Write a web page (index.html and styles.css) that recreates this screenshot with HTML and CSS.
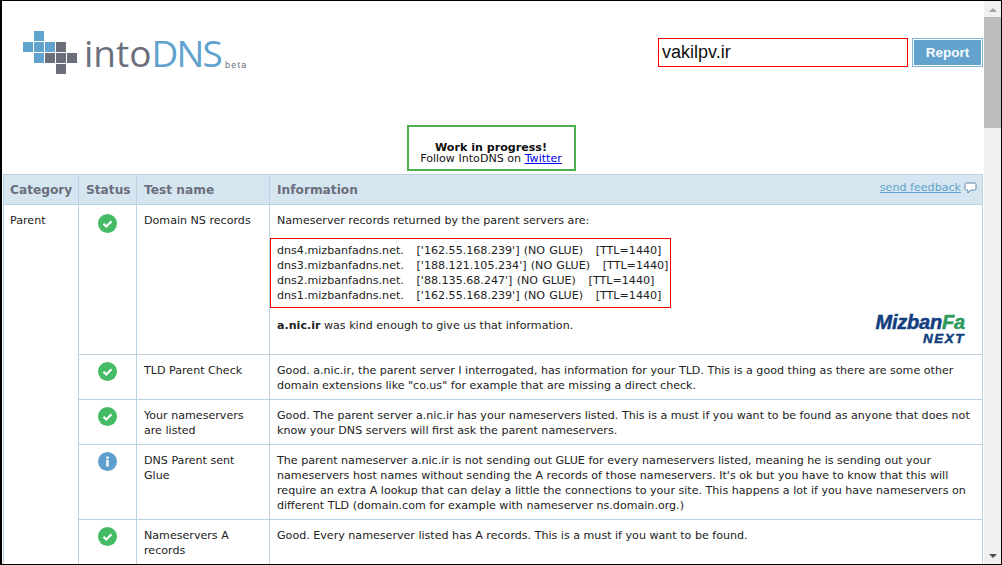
FILE: index.html
```html
<!DOCTYPE html>
<html lang="en">
<head>
<meta charset="utf-8">
<title>intoDNS</title>
<link rel="stylesheet" href="styles.css">
</head>
<body>
<div class="frame">
  <main class="page">
    <header class="top">
      <div class="logo">
        <svg class="logo-mark" width="55" height="44" viewBox="0 0 55 44">
          <g fill="#5fa3ce">
            <rect x="11" y="0" width="10" height="10"/>
            <rect x="0" y="11" width="10" height="10"/>
            <rect x="11" y="11" width="10" height="10"/>
            <rect x="22" y="11" width="10" height="10"/>
            <rect x="11" y="22" width="10" height="10"/>
          </g>
          <g fill="#6b6f7c">
            <rect x="33" y="11" width="10" height="10"/>
            <rect x="22" y="22" width="10" height="10"/>
            <rect x="33" y="22" width="10" height="10"/>
            <rect x="44" y="22" width="10" height="10"/>
            <rect x="33" y="33" width="10" height="10"/>
          </g>
        </svg>
        <span class="logo-into">into</span><span class="logo-dns">DNS</span><span class="logo-beta">beta</span>
      </div>
      <form class="search">
        <input class="search-input" type="text" value="vakilpv.ir">
        <button class="search-btn" type="button">Report</button>
      </form>
    </header>
    <div class="notice-wrap">
      <div class="notice"><strong>Work in progress!</strong><br>Follow IntoDNS on <a href="#">Twitter</a></div>
    </div>
    <table class="report">
      <colgroup>
        <col class="c-cat"><col class="c-status"><col class="c-test"><col class="c-info">
      </colgroup>
      <thead>
        <tr>
          <th class="first">Category</th><th>Status</th><th>Test name</th>
          <th class="info-head">
            <span>Information</span>
            <a class="feedback" href="#">send feedback
              <svg width="13" height="12" viewBox="0 0 13 12"><path d="M2.500 1h8A1.500 1.500 0 0 1 12 2.500v4A1.500 1.500 0 0 1 10.500 8H7l-3 3V8H2.500A1.500 1.500 0 0 1 1 6.500v-4A1.500 1.500 0 0 1 2.500 1z" fill="#fff" stroke="#5f87a8"/></svg>
            </a>
          </th>
        </tr>
      </thead>
      <tbody>
        <tr>
          <td class="first" rowspan="5">Parent</td>
          <td class="st st-first"><svg class="ico" viewBox="0 0 19 19"><circle cx="9.500" cy="9.500" r="9.500" fill="#45bb66"/><path d="M5.500 9.800l2.800 2.700 5.200-5.200" fill="none" stroke="#fff" stroke-width="2.200"/></svg></td>
          <td>Domain NS records</td>
          <td class="info-first">
            <p class="para">Nameserver records returned by the parent servers are:</p>
            <div class="records">
              <div>dns4.mizbanfadns.net. &nbsp; ['162.55.168.239'] (NO GLUE) &nbsp; [TTL=1440]</div>
              <div>dns3.mizbanfadns.net. &nbsp; ['188.121.105.234'] (NO GLUE) &nbsp; [TTL=1440]</div>
              <div>dns2.mizbanfadns.net. &nbsp; ['88.135.68.247'] (NO GLUE) &nbsp; [TTL=1440]</div>
              <div>dns1.mizbanfadns.net. &nbsp; ['162.55.168.239'] (NO GLUE) &nbsp; [TTL=1440]</div>
            </div>
            <div class="source">
              <p class="para"><strong>a.nic.ir</strong> was kind enough to give us that information.</p>
              <div class="mf"><div class="mf-name">Mizban<span class="mf-fa">Fa</span></div><div class="mf-next">NEXT</div></div>
            </div>
          </td>
        </tr>
        <tr>
          <td class="st"><svg class="ico" viewBox="0 0 19 19"><circle cx="9.500" cy="9.500" r="9.500" fill="#45bb66"/><path d="M5.500 9.800l2.800 2.700 5.200-5.200" fill="none" stroke="#fff" stroke-width="2.200"/></svg></td>
          <td>TLD Parent Check</td>
          <td>Good. a.nic.ir, the parent server I interrogated, has information for your TLD. This is a good thing as there are some other domain extensions like "co.us" for example that are missing a direct check.</td>
        </tr>
        <tr>
          <td class="st"><svg class="ico" viewBox="0 0 19 19"><circle cx="9.500" cy="9.500" r="9.500" fill="#45bb66"/><path d="M5.500 9.800l2.800 2.700 5.200-5.200" fill="none" stroke="#fff" stroke-width="2.200"/></svg></td>
          <td>Your nameservers are listed</td>
          <td>Good. The parent server a.nic.ir has your nameservers listed. This is a must if you want to be found as anyone that does not know your DNS servers will first ask the parent nameservers.</td>
        </tr>
        <tr>
          <td class="st"><svg class="ico" viewBox="0 0 19 19"><circle cx="9.500" cy="9.500" r="9.500" fill="#5f9fce"/><rect x="8.300" y="8" width="2.400" height="6.500" fill="#fff"/><rect x="8.300" y="4.500" width="2.400" height="2.400" fill="#fff"/></svg></td>
          <td>DNS Parent sent Glue</td>
          <td>The parent nameserver a.nic.ir is not sending out GLUE for every nameservers listed, meaning he is sending out your nameservers host names without sending the A records of those nameservers. It's ok but you have to know that this will require an extra A lookup that can delay a little the connections to your site. This happens a lot if you have nameservers on different TLD (domain.com for example with nameserver ns.domain.org.)</td>
        </tr>
        <tr>
          <td class="st"><svg class="ico" viewBox="0 0 19 19"><circle cx="9.500" cy="9.500" r="9.500" fill="#45bb66"/><path d="M5.500 9.800l2.800 2.700 5.200-5.200" fill="none" stroke="#fff" stroke-width="2.200"/></svg></td>
          <td>Nameservers A records</td>
          <td>Good. Every nameserver listed has A records. This is a must if you want to be found.</td>
        </tr>
      </tbody>
    </table>
  </main>
  <div class="scrollbar">
    <span class="arrow arrow-up"></span>
    <span class="thumb"></span>
    <span class="arrow arrow-down"></span>
  </div>
</div>
</body>
</html>
```

FILE: styles.css
```css
* { box-sizing: border-box; }
html, body { margin: 0; height: 100%; overflow: hidden; background: #fff; }
body { font-family: "DejaVu Sans", Verdana, sans-serif; font-size: 11.100px; line-height: 15px; color: #222; }
.frame { display: flex; width: 1002px; height: 565px; border: 1px solid #000; border-left-width: 2px; overflow: hidden; }
.page { flex: 1; min-width: 0; height: 563px; overflow: hidden; padding: 0 0 0 1px; }
.top { display: flex; justify-content: space-between; height: 124px; padding: 30px 0 0 20px; }
.logo { display: flex; align-items: flex-start; height: 44px; }
.logo-mark { margin-right: 6px; }
.logo-into, .logo-dns { font-family: "Open Sans", sans-serif; font-size: 37px; line-height: 44px; font-weight: 400; }
.logo-into { color: #6b6f7c; }
.logo-dns { color: #5fa3ce; letter-spacing: -1.800px; }
.logo-beta { font-family: "Liberation Sans", sans-serif; font-size: 9px; line-height: 12px; letter-spacing: 1.200px; margin: 28px 0 0 4px; color: #6b6f7c; }
.search { display: flex; gap: 4px; padding-top: 7px; height: 37px; }
.search-input { width: 250px; height: 29px; border: 1px solid #f00; padding: 0 3px; font-family: "Liberation Sans", Arial, sans-serif; font-size: 18px; color: #111; background: #fff; outline: none; }
.search-btn { width: 71px; height: 29px; background: #62a2cc; border: 1px solid #7db4d8; box-shadow: inset 0 0 0 1px #fff; color: #f6fafc; font-family: "Liberation Sans", Arial, sans-serif; font-weight: bold; font-size: 13.500px; padding: 0; }
.notice-wrap { display: flex; justify-content: center; padding-right: 4px; height: 49px; }
.notice { width: 169px; height: 46px; border: 2px solid #4caf50; text-align: center; padding-top: 15px; font-size: 11.100px; line-height: 11px; color: #111; }
.notice a { color: #00e; }
.report { border-collapse: collapse; table-layout: fixed; width: 980px; }
.c-cat { width: 75px; } .c-status { width: 58px; } .c-test { width: 133px; }
.report th, .report td { border: 1px solid #bdd2e0; vertical-align: top; text-align: left; padding: 8px 7px 6px; font-weight: normal; }
.report th { background: #d6e6f0; font-weight: bold; font-size: 12.200px; color: #6b6f7c; height: 30px; padding: 8px 7px 4px; }
.report .first { padding-left: 6px; }
.info-head { position: relative; }
.feedback { position: absolute; right: 5px; top: 5px; font-weight: normal; font-size: 11.100px; color: #5fa3ce; display: flex; align-items: center; gap: 3px; }
.feedback svg { display: block; }
.report .st { text-align: center; padding-top: 7px; padding-bottom: 0; }
.report .st-first { padding-top: 9px; }
.report .info-first { padding-bottom: 9px; }
.ico { width: 19px; height: 19px; display: block; margin: 0 auto; }
.para { margin: 0; }
.records { margin: 10px 0 0 -7px; width: 401px; height: 70px; border: 1px solid #f00; padding: 4px 6px; white-space: nowrap; word-spacing: 0.700px; }
.source { display: flex; justify-content: space-between; align-items: flex-start; margin-top: 10px; }
.mf { width: 92px; margin: -7px 10px 0 0; font-family: "Liberation Sans", sans-serif; font-style: italic; font-weight: bold; text-align: right; -webkit-text-stroke: 0.500px currentColor; color: #123f80; }
.mf-name { font-size: 20px; line-height: 22px; letter-spacing: -0.200px; white-space: nowrap; }
.mf-fa { color: #2f9a5c; }
.mf-next { font-size: 13.500px; line-height: 12px; letter-spacing: 1.500px; }
.scrollbar { width: 17px; flex: none; height: 100%; background: #f0f0f0; display: flex; flex-direction: column; align-items: center; margin-left: 1px; }
.arrow { flex: none; width: 0; height: 0; border-left: 4px solid transparent; border-right: 4px solid transparent; }
.arrow-up { border-bottom: 4px solid #a3a3a3; margin: 7px 0 5px; }
.thumb { width: 17px; height: 111px; background: #bcbcbc; }
.arrow-down { border-top: 4px solid #505050; margin-top: auto; margin-bottom: 6px; }
```
